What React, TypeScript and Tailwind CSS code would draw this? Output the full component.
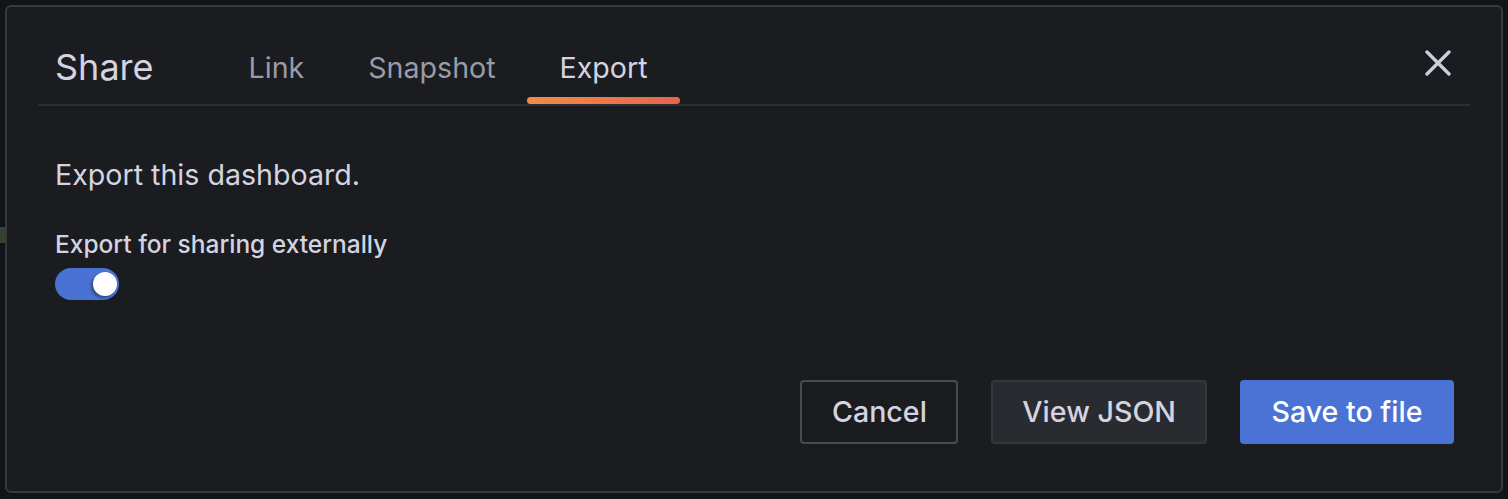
import React from "react";

function CloseIcon() {
  return (
    <svg width="26" height="26" viewBox="0 0 26 26" fill="none">
      <path d="M2 2 L24 24 M24 2 L2 24" stroke="#ccccdc" strokeWidth="3.4" strokeLinecap="round" />
    </svg>
  );
}

export default function App() {
  const tabs = [
    { label: "Link", active: false },
    { label: "Snapshot", active: false },
    { label: "Export", active: true },
  ];
  return (
    <div
      className="w-[1508px] h-[499px] bg-[#131417] pt-[5px] pl-[5px] overflow-hidden relative"
      style={{ fontFamily: "Inter, 'Noto Sans', sans-serif" }}
    >
      <div className="absolute left-0 top-[227px] w-[5px] h-[16px] bg-[#34422f]" />
      <div className="w-[1498px] h-[488px] bg-[#1b1c20] border-2 border-[#38393e] rounded-[6px] flex flex-col">
        {/* Header */}
        <div className="mx-[31px] h-[99px] border-b-2 border-[#2e2f34] flex items-end">
          <div className="pl-[17px] pb-[14px] text-[36px] leading-[45px] text-[#d4d4e0]">Share</div>
          <div className="flex ml-[63px]">
            {tabs.map((t) => (
              <div
                key={t.label}
                className={
                  "relative px-[32px] pb-[15px] pt-0 text-[28.6px] leading-[42px] " +
                  (t.active ? "text-[#d4d4e0]" : "text-[#9a9ba6]")
                }
              >
                {t.label}
                {t.active && (
                  <div className="absolute left-[-1px] right-0 bottom-0 h-[7px] rounded-full bg-gradient-to-r from-[#f08c4a] to-[#e4654b]" />
                )}
              </div>
            ))}
          </div>
          <div className="ml-auto mr-[19px] pb-[28px]">
            <CloseIcon />
          </div>
        </div>
        {/* Body */}
        <div className="flex-1 flex flex-col pl-[48px] pr-[47px] pt-[48px] pb-[47px]">
          <p className="text-[28.6px] leading-[42px] text-[#d4d4e0]">Export this dashboard.</p>
          <div className="mt-[33px] text-[24.5px] leading-[30px] font-medium text-[#d4d4e0]">
            Export for sharing externally
          </div>
          <div className="mt-[9px] w-[64px] h-[32px] rounded-full bg-[#4a72d4] flex items-center justify-end pr-[2px]">
            <div className="w-[24px] h-[24px] rounded-full bg-white shadow-[-2px_2px_3px_rgba(0,0,0,0.35)]" />
          </div>
          <div className="mt-auto flex justify-end gap-[33px]">
            <button className="h-[64px] px-[29.5px] border-2 border-[#4a4b51] rounded-[4px] text-[28.6px] font-medium text-[#d4d4e0] bg-transparent">
              Cancel
            </button>
            <button className="h-[64px] px-[29px] border-2 border-[#35363c] rounded-[4px] text-[28.6px] font-medium text-[#d4d4e0] bg-[#2a2b30]">
              View JSON
            </button>
            <button className="h-[64px] px-[31.5px] rounded-[4px] text-[28.6px] font-medium text-white bg-[#4a73d5]">
              Save to file
            </button>
          </div>
        </div>
      </div>
    </div>
  );
}
